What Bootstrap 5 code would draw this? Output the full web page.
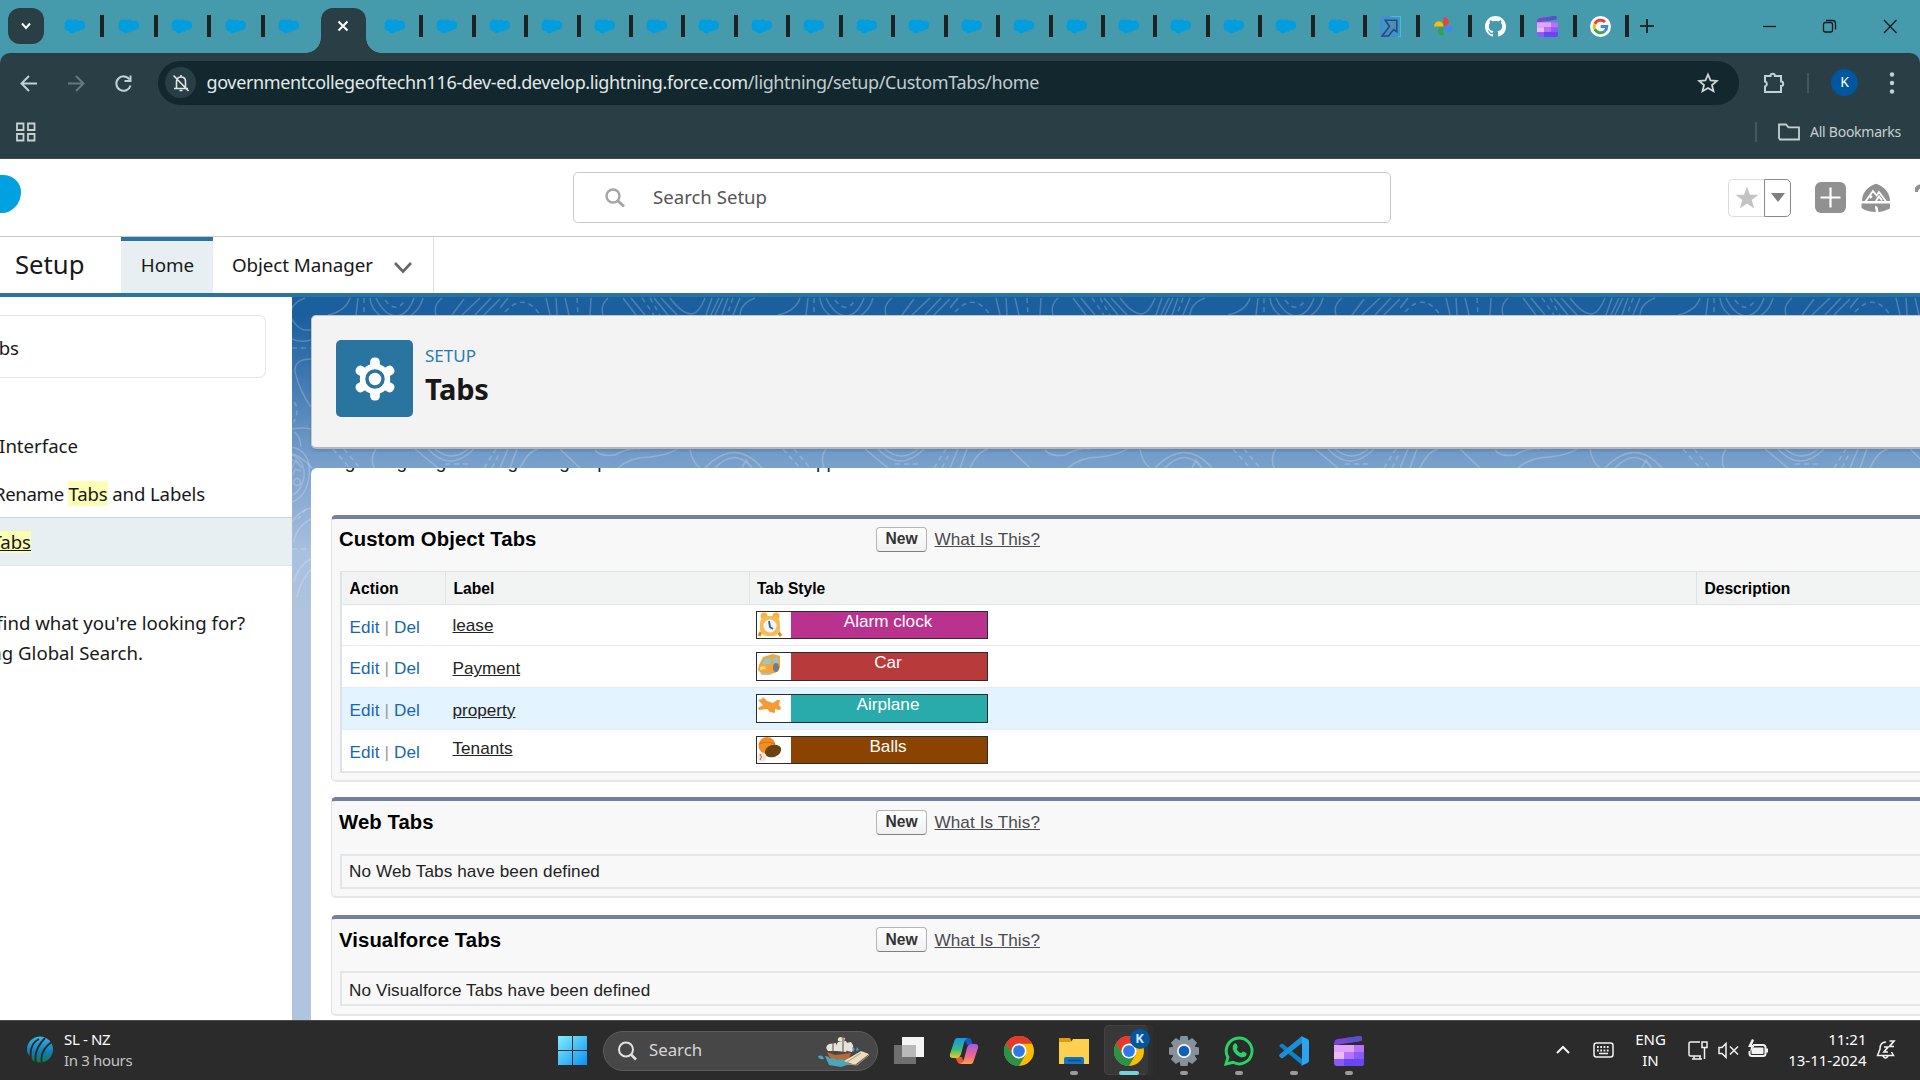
<!DOCTYPE html>
<html lang="en">
<head>
<meta charset="utf-8">
<title>Tabs | Salesforce</title>
<link href="https://cdn.jsdelivr.net/npm/bootstrap@5.3.0/dist/css/bootstrap.min.css" rel="stylesheet">
<style>
body{width:1920px;height:1080px;font-family:"Noto Sans","Open Sans",sans-serif;color:#181818;line-height:1.2}
svg{display:block;flex:none}
.tabstrip{height:53px;background:#459aac}
.tab-menu{width:36px;height:36px;margin:8px 0 0 8px;border-radius:12px;background:#293f45}
.tab-cell{width:52.45px;height:22px;padding:1px 0 0 13px;margin-top:15px;border-right:4px solid #1f2223}
.tab-cell svg{width:21px;height:21px}
.tab-first{margin-left:6.6px}
.wide-tab{width:53.6px;padding-left:13.4px}
.last-before{border-color:transparent}
.tab-active{width:45px;height:45px;margin:8px 5px 0 2.3px;border-radius:12px 12px 0 0;background:#293f45;position:relative;padding-bottom:9px}
.tab-active::before,.tab-active::after{content:"";position:absolute;bottom:0;width:15px;height:15px}
.tab-active::before{left:-15px;background:radial-gradient(circle at 0 0,transparent 14.5px,#293f45 15px)}
.tab-active::after{right:-15px;background:radial-gradient(circle at 100% 0,transparent 14.5px,#293f45 15px)}
.new-tab{width:28px;padding:19px 0 0 11px}
.chrome-top{background:#459aac}
.toolbar{height:106px;background:#293f45;border-radius:10px 10px 0 0;border-bottom:1px solid #3b4c51}
.url-row{height:52px;padding-top:7px}
.omni{width:1581px;height:44px;border-radius:22px;background:#12282e;color:#e3e9eb;font-size:18px}
.omni-site{width:31px;height:31px;border-radius:50%;background:#293f45;margin-left:7px}
.url-tx{margin-left:10.5px;letter-spacing:-.365px}
.url-path{color:#c2cdd0}
.v-rule{width:2px;height:20px;background:#42585e}
.k-avatar{width:27px;height:27px;border-radius:50%;background:#00579f;color:#fff;font-size:14px}
.bm-row{height:53px;padding-top:1px;color:#c8cfd1;font-size:14px}
.bm-tx{margin:0 19px 0 10px;letter-spacing:-.25px}
.sf-head{height:78px;border-bottom:1px solid #c9c9c9}
.sf-cloud{width:21px;height:38px;background:#00a1e0;border-radius:0 18px 19px 0/0 17px 21px 0;margin-bottom:7px}
.sf-search{width:818px;height:51px;border:1px solid #c9c9c9;border-radius:5px;font-size:18.6px;color:#555;margin-left:552px}
.fav-l{width:36px;height:38px;border:1px solid #dcdcdc;border-right:0;border-radius:5px 0 0 5px}
.fav-r{width:27px;height:38px;border:1px solid #8b8b8b;border-radius:0 5px 5px 0}
.sf-nav{height:60px;border-bottom:4px solid #2a74a0;font-size:18.8px}
.app-name{width:121px;padding-left:15px;font-size:25.7px}
.nav-home{width:92px;background:#e8eff2;border-top:4px solid #2a74a0}
.nav-home span{margin:-4px 0 0 1px}
.nav-om{width:221px;padding-left:19px;border-right:1px solid #e2e2e2}
.om-tx{letter-spacing:-.08px}
.side{width:292px;font-size:18.6px}
.side-box{width:266px;height:63px;margin-top:18px;border:1px solid #e5e5e5;border-left:0;border-radius:0 7px 7px 0}
.clip-r{display:flex;justify-content:flex-end;align-items:center;overflow:hidden;white-space:nowrap}
.ren{letter-spacing:-.13px}
.ren1{letter-spacing:-.35px}
.hl{background:#fbffb5}
.side-sel{height:49px;background:#e8eff2;border-top:1px solid #c5dae5;border-bottom:1px solid #dce8ee;padding-top:1px}
.main-area{background:#b0c4df;position:relative;overflow:hidden}
.topo{position:absolute;left:0;top:0}
.page-head{position:relative;margin:18px 0 0 19px;height:134px;width:1640px;background:#f3f3f3;border:1px solid #c4c6c9;border-bottom:2px solid #b5b9bf;border-radius:5px;box-shadow:0 2px 3px rgba(0,0,0,.12);padding:24px 0 0 24px}
.gear-tile{width:77px;height:77px;border-radius:5px;background:#2a74a0}
.eyebrow{color:#2a7ab0;font-size:17px;line-height:20px}
.page-title{font-size:29px;line-height:34px;letter-spacing:-.3px;margin-top:6px}
.frame-body{position:relative;margin:19px 0 0 19px;width:1640px;height:560px;background:#fff;border-radius:6px 0 0 0;overflow:hidden;font-family:"Liberation Sans",Arial,sans-serif;font-size:17.15px;color:#222}
.intro{font-size:19px;line-height:20px;margin-top:-16px;height:63px;padding-left:19px;white-space:nowrap}
.sect{margin-left:20px;width:1640px;background:#f8f8f8;border-left:1px solid #e2e2e2;border-bottom:2px solid #e6e6e6;border-top:4px solid #757f9c;border-radius:5px;padding-left:8px}
.sect-title{width:537px;margin-left:-1px;font-size:20.3px;letter-spacing:.1px;color:#000}
.sect-bar{height:38px;line-height:20px}
.sect-first{padding-top:2px}
.btn-new{width:51px;height:25px;padding:0;border:1px solid #b5b5b5;border-bottom-color:#7f7f7f;border-radius:4px;background:linear-gradient(#fff,#f0f0f0);font-size:15.6px;font-weight:700;line-height:22px;color:#333}
.what{color:#4a4a4f;margin-left:7.5px;text-decoration:underline;letter-spacing:.08px}
.grid-tbl{border:1px solid #e0e3e5;border-width:1px 0 1px 2px;margin-top:14px}
.g-row{height:41.75px;border-bottom:1px solid #e8eaec;background:#fff;display:flex}
.g-head{height:32.5px;background:#f2f3f3;font-size:15.6px;color:#000;font-weight:700;border-bottom:1px solid #e0e3e5}
.g-head>div{padding-top:3px}
.g-hov{background:#e3f3ff}
.c-act{width:103px;padding-left:7.5px}
.g-row .c-act{letter-spacing:.12px}
.c-lab{width:303.5px;padding-left:7.5px}
.c-sty{width:947.5px;padding-left:7.5px}
.c-des{padding-left:7.5px}
.g-head>.c-lab,.g-head>.c-sty,.g-head>.c-des{border-left:1px solid #e0e3e5}
.g-row a{color:#1766b0}
.g-row .c-lab a{color:#222;text-decoration:underline}
.g-bar{color:#999}
.swatch{width:232px;height:28.5px;border:1.5px solid #2c2c2c;color:#fff}
.swatch-ic{width:34px;background:#fff}
.swatch-tx{padding:0 2px 8px 0}
.empty{border:1px solid #e3e6e8;border-width:2px 0 2px 2px;height:35px;padding-left:7px;letter-spacing:.1px}
.taskbar{height:60px;background:#2b2b2b;border-top:1px solid #4a4c4c;color:#fff;font-size:15px;line-height:20.5px}
.tb-wx{width:494px;margin-left:11px;padding-bottom:2px;letter-spacing:-.35px}
.wx2{color:#c4c4c4}
.tray-up{margin-bottom:2px}
.tb-search{width:275px;height:40px;border-radius:20px;background:#474747;border:1px solid #5c5c5c;color:#d6d6d6;font-size:16.8px}
.tb-item{width:55px;height:60px;position:relative}
.tb-item::after{content:"";position:absolute;bottom:6px;left:23.5px;width:8px;height:4px;border-radius:2px;background:#9b9b9b}
.tb-none::after{display:none}
.tb-on::before{content:"";position:absolute;left:2px;top:4px;width:49px;height:50px;border-radius:5px;background:#383838;box-shadow:inset -6px 0 0 -1px #2f2f2f,inset 0 0 0 1px #434343}
.tb-on::after{left:17.5px;width:20px;background:#76d3dc}
.tb-on svg{position:relative}
.tb-badge{position:absolute;left:28px;top:8px;width:20px;height:20px;border-radius:50%;background:#00579f;font-size:13px;color:#cfe4f5}
</style>
<script src="https://cdn.jsdelivr.net/npm/bootstrap@5.3.0/dist/js/bootstrap.bundle.min.js"></script>
</head>
<body class="d-flex flex-column overflow-hidden m-0">
<svg width="0" height="0" class="position-absolute">
<defs>
<symbol id="sf" viewBox="0 0 20 20"><path fill="#009ddf" d="M8.300 4.200A4 4 0 0 1 14 5a4 4 0 0 1 6 4.200c0 3-2.600 4.400-4.800 4-1 1.600-2.800 1.700-4 1.200-1.200 2.800-5.400 3-6.700-.2C1.800 14.600-.2 12 .8 9.600 0 6 2.200 3.300 5 3.300c1.400 0 2.600.2 3.300.9z"/></symbol>
<symbol id="chrome" viewBox="0 0 48 48"><circle cx="24" cy="24" r="24" fill="#fbbc04"/><path fill="#e23b2e" d="M3.200 12A24 24 0 0 1 44.800 12H24L13.600 30z"/><path fill="#2d9246" d="M3.200 12A24 24 0 0 0 24 48l10.400-18L24 34H16z"/><path fill="#e23b2e" d="M44.800 12A24 24 0 0 0 3.200 12L8 17l8 1 8-6z"/><path fill="#2d9246" d="M3.200 12L13.600 30l8 6L24 48A24 24 0 0 1 3.200 12z"/><circle cx="24" cy="24" r="12" fill="#fff"/><circle cx="24" cy="24" r="9.400" fill="#2f79e8"/></symbol>
<symbol id="clip" viewBox="0 0 30 30"><path fill="#7a45d6" d="M0 8.500C0 5 1 3.500 4 3L26 0c2-.2 3 4 1 5L2 9z"/><path fill="#5b4fd0" d="M13 1.800L26 0c2-.2 3 4 1 5l-14 2z"/><path fill="#8a5cf5" d="M0 9h30v18a3 3 0 0 1-3 3H3a3 3 0 0 1-3-3z"/><path fill="#e2a3fb" d="M0 9h20v7H0z"/><path fill="#b673f7" d="M20 9h10v7H20zM10 16h10v7H10z"/><path fill="#ecb9fd" d="M0 16h10v7H0z"/><path fill="#6a45f4" d="M10 23h20v4a3 3 0 0 1-3 3H10z"/></symbol>
<symbol id="gear" viewBox="-20 -21 40 42"><g fill="currentColor"><circle r="14.500"/><g id="t"><rect x="-4.600" y="-20.500" width="9.200" height="41" rx="4"/></g><use href="#t" transform="rotate(60)"/><use href="#t" transform="rotate(120)"/></g></symbol>
</defs>
</svg>

<div class="tabstrip d-flex" id="strip">
  <div class="tab-menu d-flex align-items-center justify-content-center"><svg width="12" height="12" fill="none" stroke="#fff" stroke-width="2"><path d="M2 3.500l4 4.500 4-4.500"/></svg></div>
  <div class="tab-active d-flex align-items-center justify-content-center" id="active"><svg width="12" height="12" stroke="#fff" stroke-width="2"><path d="M1.500 1.500l9 9m0-9l-9 9"/></svg></div>
  <div class="tab-cell"><svg viewBox="0 0 20 20"><path fill="#3f96c4" stroke="#4787da" stroke-width="1.500" d="M3 1h16v18H1V4z"/><path fill="#4a8fb8" stroke="#25497a" stroke-width="1.500" d="M5 4h11v11l-3-2-5 6H2l7-9z"/><path stroke="#39c6cf" fill="none" d="M10 .5h9.500v19H17"/></svg></div>
  <div class="tab-cell"><svg viewBox="0 0 20 20"><path fill="#ea4335" d="M10 1a5 4.500 0 0 1 0 9z"/><path fill="#4285f4" d="M19 10a4.500 5 0 0 1-9 0z"/><path fill="#2fa34f" d="M10 19a5 4.500 0 0 1 0-9z"/><path fill="#fbbc04" d="M1 10a4.500 5 0 0 1 9 0z"/></svg></div>
  <div class="tab-cell"><svg viewBox="0 0 16 16" fill="#fff"><path d="M8 0C3.580 0 0 3.580 0 8c0 3.540 2.290 6.530 5.470 7.590.4.070.55-.17.55-.38 0-.19-.01-.82-.01-1.490-2.010.37-2.530-.49-2.690-.94-.09-.23-.48-.94-.82-1.130-.28-.15-.68-.52-.01-.53.63-.01 1.080.58 1.230.82.720 1.210 1.870.87 2.330.66.070-.52.280-.87.510-1.070-1.780-.2-3.640-.89-3.640-3.950 0-.87.310-1.590.82-2.150-.08-.2-.36-1.020.08-2.120 0 0 .67-.21 2.200.82.640-.18 1.320-.27 2-.27s1.360.09 2 .27c1.530-1.040 2.200-.82 2.200-.82.440 1.100.160 1.920.080 2.120.510.560.820 1.270.820 2.150 0 3.070-1.870 3.750-3.650 3.950.290.250.540.730.540 1.480 0 1.070-.01 1.930-.01 2.200 0 .21.150.46.550.38A8.010 8.010 0 0 0 16 8c0-4.420-3.580-8-8-8z"/></svg></div>
  <div class="tab-cell"><svg><use href="#clip"/></svg></div>
  <div class="tab-cell"><svg viewBox="0 0 20 20"><circle cx="10" cy="10" r="10" fill="#fff"/><g fill="none" stroke-width="2.800"><path stroke="#ea4335" d="M4.600 7.400A6 6 0 0 1 14.300 5.800"/><path stroke="#fbbc04" d="M4.600 12.600a6 6 0 0 1 0-5.200"/><path stroke="#34a853" d="M14 14.500a6 6 0 0 1-9.400-1.900"/><path stroke="#4285f4" d="M10.200 10H16a6 6 0 0 1-2 4.500"/></g></svg></div>
  <div class="new-tab"><svg width="14" height="14" stroke="#1d2b2e" stroke-width="2"><path d="M7 0v14M0 7h14"/></svg></div>
  <svg width="170" height="53" class="ms-auto" fill="none" stroke="#101a1c" stroke-width="1.300"><path d="M13 26.500h13"/><rect x="73.500" y="22.500" width="9" height="9.500" rx="2"/><path d="M76 20.500h6.500a3 3 0 0 1 3 3v6"/><path d="M134 20l12.500 13M146.500 20L134 33"/></svg>
</div>

<div class="chrome-top">
<div class="toolbar">
  <div class="url-row d-flex align-items-center">
    <svg width="158" height="44" fill="none" stroke="#c0d2d7" stroke-width="2"><path d="M37 22.500H22M29 15l-7.500 7.500L29 30"/><path stroke="#66797e" d="M68 22.500h15M76 15l7.500 7.500L76 30"/><path d="M129.500 18.500a7.200 7.200 0 1 0 1 6"/><path d="M130.500 14.500v5.500h-6" /></svg>
    <div class="omni d-flex align-items-center">
      <div class="omni-site d-flex align-items-center justify-content-center"><svg width="20" height="20" fill="none" stroke="#e0e6e8" stroke-width="1.600"><path d="M3 15.500h14M5.500 15V8.500C5.500 5.500 7.500 4 10 4s4.500 1.500 4.500 4.500V15M10 2v2M8.500 17.500h3M2.500 2.500l15 15.500"/></svg></div>
      <span class="url-tx">governmentcollegeoftechn116-dev-ed.develop.lightning.force.com<span class="url-path">/lightning/setup/CustomTabs/home</span></span>
      <svg width="42" height="22" class="ms-auto" fill="none" stroke="#cfd6d8" stroke-width="1.800"><path d="M11 2.500l2.500 5.800 6.300.6-4.800 4.100 1.500 6.200L11 16l-5.500 3.200L7 13 2.200 8.900l6.300-.6z"/></svg>
    </div>
    <svg width="24" height="24" style="margin-left:23px" fill="none" stroke="#c0d2d7" stroke-width="2"><path d="M3 5h5.500a2.200 2.200 0 0 1 4.400 0H19v5.500a2.200 2.200 0 0 1 0 4.400V21H3v-5.500a2.600 2.600 0 0 0 0-5z"/></svg>
    <div class="v-rule" style="margin-left:21px"></div>
    <div class="k-avatar d-flex align-items-center justify-content-center" style="margin-left:22px">K</div>
    <svg width="6" height="24" style="margin-left:31px" fill="#c0d2d7"><circle cx="3" cy="3.500" r="2.200"/><circle cx="3" cy="12" r="2.200"/><circle cx="3" cy="20.500" r="2.200"/></svg>
  </div>
  <div class="bm-row d-flex align-items-center">
    <svg width="20" height="20" style="margin-left:16px" fill="none" stroke="#c8cfd1" stroke-width="1.800"><path d="M1 1.500h6.500V8H1zM12 1.500h6.500V8H12zM1 12h6.500v6.500H1zM12 12h6.500v6.500H12z"/></svg>
    <div class="v-rule ms-auto"></div>
    <svg width="22" height="18" style="margin-left:21px" fill="none" stroke="#c8cfd1" stroke-width="1.800"><path d="M1 15V1.500h7l2.500 2.800H21V16.500H2z"/></svg>
    <span class="bm-tx">All Bookmarks</span>
  </div>
</div>
</div>

<header class="sf-head d-flex align-items-center bg-white flex-shrink-0">
  <div class="sf-cloud"></div>
  <div class="sf-search d-flex align-items-center">
    <svg width="22" height="22" style="margin-left:30px" fill="none" stroke="#a5a5a5" stroke-width="2.400"><circle cx="9" cy="9" r="6.500"/><path d="M13.500 13.500l6.500 6" stroke-width="3"/></svg>
    <span style="margin-left:27px">Search Setup</span>
  </div>
  <div class="d-flex align-items-center" style="margin-left:337px">
    <div class="fav-l d-flex align-items-center justify-content-center"><svg width="24" height="24" fill="#c4c4c4"><path d="M12 .5l3 8.300h8.500l-6.800 5.200 2.500 8.500L12 17.500 4.800 22.500 7.300 14 .5 8.800H9z"/></svg></div>
    <div class="fav-r d-flex align-items-center justify-content-center"><svg width="14" height="9" fill="#7f7f7f"><path d="M0 0h14L7 9z"/></svg></div>
    <svg width="31" height="31" style="margin-left:24px"><rect width="31" height="31" rx="6" fill="#919191"/><path d="M15.500 5.500v20M5.500 15.500h20" stroke="#fff" stroke-width="2.200"/></svg>
    <svg width="30" height="30" style="margin-left:15px"><path fill="#919191" d="M1 18C1 9 8 3 15 .8 22 3 29 9 29 18zM.5 20.500h28.500v5C24 28 19 29 17.500 29l-1-5-2-1.500-.5 2 1 4.500C11 29 5 28 .5 25z"/><path d="M4.500 18.500L12 8l3.500 4.500L18 9l7 9.500M9 15l2-2M15 18l3-4.500 3 4" fill="none" stroke="#fff" stroke-width="1.900"/></svg>
    <svg width="5" height="30" style="margin-left:24px"><path d="M1 9Q1 4 6 3" fill="none" stroke="#919191" stroke-width="4"/></svg>
  </div>
</header>
<nav class="sf-nav d-flex bg-white flex-shrink-0">
  <div class="app-name d-flex align-items-center">Setup</div>
  <div class="nav-home d-flex align-items-center justify-content-center"><span>Home</span></div>
  <div class="nav-om d-flex align-items-center"><span class="om-tx">Object Manager</span><svg width="18" height="13" style="margin:4px 21px 0 auto" fill="none" stroke="#666" stroke-width="2.600"><path d="M1 2l8 8.500L17 2"/></svg></div>
</nav>

<div class="d-flex flex-grow-1 overflow-hidden">
  <aside class="side bg-white flex-shrink-0">
    <div class="side-box d-flex align-items-center pt-1"><div class="clip-r" style="width:19px">bs</div></div>
    <div class="clip-r" style="width:78px;height:30px;margin-top:53px">Interface</div>
    <div class="clip-r" style="width:205px;height:30px;margin-top:18px"><span class="ren"><span class="ren1">Rename</span> <span class="hl">Tabs</span> and Labels</span></div>
    <div class="side-sel d-flex align-items-center" style="margin-top:8px"><div class="clip-r" style="width:31px"><span class="hl text-decoration-underline">Tabs</span></div></div>
    <div class="clip-r" style="width:245px;height:30px;margin-top:42px">find what you're looking for?</div>
    <div class="clip-r" style="width:143px;height:30px">ng Global Search.</div>
  </aside>
  <main class="main-area flex-grow-1">
    <svg class="topo" width="1628" height="320" fill="none" stroke="#fff" stroke-opacity=".21" stroke-width="1.500">
      <defs>
        <linearGradient id="sky" x1="0" y1="0" x2="0" y2="1"><stop offset=".06" stop-color="#1b5f9f"/><stop offset=".25" stop-color="#3f78b0"/><stop offset=".5" stop-color="#759dca"/><stop offset=".8" stop-color="#a9c0df"/><stop offset="1" stop-color="#b0c4df"/></linearGradient>
        <pattern id="wave" x="208" y="0" width="450" height="172" patternUnits="userSpaceOnUse">
          <path d="M0 11L8 1M46 1l4 17M56 1l1 17M65 1l4 17M91 1l-1 17M108 1Q100 8 103 18M123 1l13 17M131 1l14 17M154 1l14 17M161 1l16 17M170 1Q182 17 192 17 199 16 205 1M212 1l-6 17M219 1l-8 17M223 1l-8 17M228 1l-6 17M240 1l-7 17M255 1Q241 6 240 18M300 1Q296 14 278 18M308 1l-2 17M320 1Q322 20 346 24 368 20 373 1M326 1Q334 18 346 19 358 18 364 1M392 1Q383 8 386 18M430 1l-18 17M414 2l-12 16M441 1l-16 17M450 2l-16 16"/>
          <path stroke-dasharray="5 4" d="M5 15Q24-6 40 18M77 1l1 17M142 1l12 17M150 1l10 17M233 1l-6 17M314 1v17M335 3Q346 18 356 2"/>
          <path d="M0 171l8-19M10 171l7-19M20 171Q28 154 38 152M60 152l20 19M95 153Q100 160 115 158 130 150 140 152M118 171Q130 160 150 160 170 158 180 150M190 152Q192 165 200 171M205 171Q235 140 262 171M215 171Q235 150 252 171M242 171l4-8 6 8M326 152Q320 160 324 171M365 152l23 19M378 152Q400 176 424 152M385 152Q402 166 418 152"/>
          <path stroke-dasharray="5 4" d="M283 152l17 19M294 152l16 19M395 167h26M434 171l12-19M442 171l8-16"/>
        </pattern>
      </defs>
      <rect width="1628" height="320" fill="url(#sky)" stroke="none"/>
      <rect width="1628" height="172" fill="url(#wave)" stroke="none"/>
      <path d="M0 22Q5 31 12 33h7M0 42Q8 46 19 43M19 62Q2 62 3 75 8 95 19 110M0 132q10-2 19 0M2 135q6 3 7 15M0 150Q20 155 17 180 14 200 0 205M0 158q13 5 12 22-4 16-12 18M1 178l2-6 6 2M0 225q8-12 19-14M19 222Q4 230 2 245M19 262Q6 268 2 285M19 272Q8 285 5 300"/><circle cx="5" cy="185" r="3.500"/>
      <path stroke-dasharray="5 4" d="M0 51h19M2 105q6 7 0 20M14 212l-8 10M0 252h19"/>
    </svg>
    <div class="page-head d-flex">
      <div class="gear-tile d-flex align-items-center justify-content-center text-white"><svg width="42" height="44"><use href="#gear"/><circle cx="21" cy="22" r="8" fill="#fff" stroke="#2a74a0" stroke-width="3.500"/></svg></div>
      <div style="margin:6px 0 0 12px"><div class="eyebrow">SETUP</div><div class="page-title fw-bold">Tabs</div></div>
    </div>
    <div class="frame-body">
      <div class="intro">Lightning Pages to Lightning Experience and the mobile app</div>
      <section class="sect" style="height:267px">
        <div class="sect-bar sect-first d-flex align-items-center"><div class="sect-title fw-bold">Custom Object Tabs</div><button class="btn btn-new">New</button><a class="what">What Is This?</a></div>
        <div class="grid-tbl">
          <div class="g-row g-head"><div class="c-act d-flex align-items-center">Action</div><div class="c-lab d-flex align-items-center">Label</div><div class="c-sty d-flex align-items-center">Tab Style</div><div class="c-des d-flex align-items-center flex-grow-1">Description</div></div>
          <div class="g-row align-items-center"><div class="c-act pt-1"><a class="text-decoration-none">Edit</a> <span class="g-bar">|</span> <a class="text-decoration-none">Del</a></div><div class="c-lab"><a>lease</a></div><div class="c-sty"><div class="swatch d-flex" style="background:#b8328e"><div class="swatch-ic"><svg width="30" height="25"><circle cx="7" cy="4" r="3.500" fill="#f5b53a"/><circle cx="19" cy="4" r="3.500" fill="#f5b53a"/><path d="M4 20l-2 4M21 20l3 4" stroke="#d98c1c" stroke-width="3"/><rect x="3" y="4" width="20" height="20" rx="7" fill="#f6bd55"/><circle cx="13" cy="14" r="6.500" fill="#f4f6fa"/><path d="M12 9l1 6 3 2" fill="none" stroke="#345d9c" stroke-width="1.800"/></svg></div><div class="swatch-tx flex-grow-1 d-flex align-items-center justify-content-center">Alarm clock</div></div></div></div>
          <div class="g-row align-items-center"><div class="c-act pt-1"><a class="text-decoration-none">Edit</a> <span class="g-bar">|</span> <a class="text-decoration-none">Del</a></div><div class="c-lab pt-1"><a>Payment</a></div><div class="c-sty"><div class="swatch d-flex" style="background:#b83a3a"><div class="swatch-ic"><svg width="30" height="25"><path fill="#f2a73a" d="M2 12L6 4l10-3 7 2v12l-5 5H4l-3-3z"/><path fill="#8fc7dc" d="M5 11l3-5 6-1v6zM16 5l5-1v6l-4 2z"/><path fill="#fbd98a" d="M3 14l5-1 1 3-6 1z"/><ellipse cx="19" cy="14.500" rx="3" ry="4.500" fill="#727d86"/><path fill="#bbb" d="M3 20h14l-4 2H5z"/></svg></div><div class="swatch-tx flex-grow-1 d-flex align-items-center justify-content-center">Car</div></div></div></div>
          <div class="g-row g-hov align-items-center"><div class="c-act pt-1"><a class="text-decoration-none">Edit</a> <span class="g-bar">|</span> <a class="text-decoration-none">Del</a></div><div class="c-lab pt-1"><a>property</a></div><div class="c-sty"><div class="swatch d-flex" style="background:#2aabab"><div class="swatch-ic"><svg width="30" height="25"><path fill="#f39b35" d="M1 5l4-1 1-2 4 4 6 2 4-3 3 0-1 5c3 3 2 5 0 5l-4-1 0 4-5-1-3-3-8 1-1-2 5-3z"/></svg></div><div class="swatch-tx flex-grow-1 d-flex align-items-center justify-content-center">Airplane</div></div></div></div>
          <div class="g-row align-items-center"><div class="c-act pt-1"><a class="text-decoration-none">Edit</a> <span class="g-bar">|</span> <a class="text-decoration-none">Del</a></div><div class="c-lab pb-1"><a>Tenants</a></div><div class="c-sty"><div class="swatch d-flex" style="background:#8b4300"><div class="swatch-ic"><svg width="30" height="25"><circle cx="10" cy="8.500" r="8.500" fill="#ef8f22"/><path d="M2 7q8-4 16 0" fill="none" stroke="#d8720e"/><ellipse cx="16" cy="14" rx="8.500" ry="6" fill="#6b4313" transform="rotate(-20 16 14)"/><circle cx="5" cy="20" r="4.500" fill="#eee4e0"/><path d="M3 17q3 3 0 6" fill="none" stroke="#d9534f"/></svg></div><div class="swatch-tx flex-grow-1 d-flex align-items-center justify-content-center">Balls</div></div></div></div>
        </div>
      </section>
      <section class="sect" style="height:101px;margin-top:15px">
        <div class="sect-bar d-flex align-items-center pt-1"><div class="sect-title fw-bold">Web Tabs</div><button class="btn btn-new">New</button><a class="what">What Is This?</a></div>
        <div class="empty d-flex align-items-center" style="margin-top:15px">No Web Tabs have been defined</div>
      </section>
      <section class="sect" style="height:101px;margin-top:16.5px">
        <div class="sect-bar d-flex align-items-center pt-1"><div class="sect-title fw-bold">Visualforce Tabs</div><button class="btn btn-new">New</button><a class="what">What Is This?</a></div>
        <div class="empty d-flex align-items-center pt-1" style="margin-top:14px">No Visualforce Tabs have been defined</div>
      </section>
    </div>
  </main>
</div>

<footer class="taskbar d-flex align-items-center flex-shrink-0">
  <svg width="26" height="28" style="margin-left:27px" class="tray-up" viewBox="0 0 26 28"><defs><linearGradient id="ic" x1="0" y1="0" x2="0" y2="1"><stop offset="0" stop-color="#3ab4e6"/><stop offset=".6" stop-color="#0f7db8"/><stop offset="1" stop-color="#0c7a45"/></linearGradient></defs><circle cx="13" cy="13.500" r="13" fill="url(#ic)"/><path d="M-1 17L5 24M4 22Q2 8 12 3M9 27Q6 14 18 2M15 28Q12 14 26 5" fill="none" stroke="#2b2b2b" stroke-width="1.900"/></svg>
  <div class="tb-wx"><div>SL - NZ</div><div class="wx2">In 3 hours</div></div>
  <svg width="29" height="29"><defs><linearGradient id="win" x1="0" y1="0" x2="1" y2="1"><stop offset="0" stop-color="#7ef0fc"/><stop offset="1" stop-color="#0c90f4"/></linearGradient></defs><path fill="url(#win)" d="M0 0h14v14H0zM15 0h14v14H15zM0 15h14v14H0zM15 15h14v14H15z"/></svg>
  <div class="tb-search d-flex align-items-center" style="margin-left:16px">
    <svg width="20" height="20" style="margin-left:13px" fill="none" stroke="#e2e2e2" stroke-width="2"><circle cx="9" cy="8.500" r="7"/><path d="M14 13.500l5 5" stroke-width="2.500"/></svg>
    <span style="margin-left:12px">Search</span>
    <svg width="52" height="34" class="ms-auto" style="margin-right:8px"><path fill="#b56a38" d="M10 18l8 3 16-2-3 9H15z"/><path fill="#e6e2dc" d="M11 17q-4-4 1-7l7-1 1 8zM20 17q-2-5 1-9l8-1q4 6 0 11zM30 17q2-6-1-8l5-1q4 5 1 10zM21 7q-1-3 2-4l5 1-1 4z"/><path d="M26 0v18M16 7v12" stroke="#6b4a33"/><path fill="#4ba6bb" d="M8 22q4 0 5 3 4-2 7 1 5-2 9 1l4 3-9 3-12-2z"/><path fill="#4ba6bb" d="M1 22q5-2 6 3-5 1-6-3zM35 13l3 2-2 3zM40 13l2 3-3 1z"/><path fill="#e9dcc0" d="M27 27L44 17l8 3-14 11z"/><path d="M30 30l10 1 12-10M30 28l14-9" stroke="#b09b78" fill="none"/></svg>
  </div>
  <div class="d-flex" style="margin-left:3.500px">
    <div class="tb-item tb-none d-flex align-items-center justify-content-center"><svg width="30" height="28"><path fill="#f4f4f4" d="M8 0h22v20H8z"/><path fill="#6f6f6f" d="M0 8h22v19H0z"/><path fill="#b9b9b9" d="M8 8h14v12H8z"/></svg></div>
    <div class="tb-item tb-none d-flex align-items-center justify-content-center"><svg width="30" height="30" viewBox="0 0 30 30"><defs><linearGradient id="cp1" x1="0" y1="0" x2="0" y2="1"><stop offset="0" stop-color="#1696e8"/><stop offset=".55" stop-color="#35b889"/><stop offset="1" stop-color="#e8cd25"/></linearGradient><linearGradient id="cp2" x1="0" y1="0" x2="0" y2="1"><stop offset="0" stop-color="#a05be8"/><stop offset=".6" stop-color="#f0668c"/><stop offset="1" stop-color="#fba04e"/></linearGradient></defs><path fill="#1558c0" d="M15 2h5q2 0 3 4l1 3h-6z"/><path fill="#f0562b" d="M6 21h7l2 7h-4q-2 0-3-3z"/><path fill="url(#cp1)" d="M8 2h11q-3 1-4 5l-3 11q-1 4-5 4H4q-4 0-3-4L5 6q1-4 3-4z"/><path fill="url(#cp2)" d="M22 28H11q3-1 4-5l3-11q1-4 5-4h3q4 0 3 4l-4 12q-1 4-3 4z"/></svg></div>
    <div class="tb-item tb-none d-flex align-items-center justify-content-center"><svg width="30" height="30"><use href="#chrome"/></svg></div>
    <div class="tb-item d-flex align-items-center justify-content-center"><svg width="30" height="28"><path fill="#dd9e0b" d="M0 1h11l2 4v5H0z"/><path fill="#fdd04f" d="M0 5h12l2-3h16v25H0z"/><path fill="#1273c4" d="M5 27v-5q0-2 2-2h16q2 0 2 2v5z"/><path d="M9 23.500h13" stroke="#0a4a86" stroke-width="1.500"/></svg></div>
    <div class="tb-item tb-on d-flex align-items-center justify-content-center"><svg width="30" height="30"><use href="#chrome"/></svg><div class="tb-badge d-flex align-items-center justify-content-center fw-bold">K</div></div>
    <div class="tb-item d-flex align-items-center justify-content-center"><svg width="30" height="30" viewBox="-15 -15 30 30"><g fill="#86919b"><circle r="11.500"/><g id="g4"><path d="M-3.500-15h7l1 5h-9zM-3.500 15h7l1-5h-9z"/></g><use href="#g4" transform="rotate(45)"/><use href="#g4" transform="rotate(90)"/><use href="#g4" transform="rotate(135)"/></g><circle r="7" fill="#f0f2f4"/><circle r="5.300" fill="#0f62b0"/></svg></div>
    <div class="tb-item d-flex align-items-center justify-content-center"><svg width="30" height="30" viewBox="0 0 30 30"><path d="M2 28l1.900-6.700A12.900 12.900 0 1 1 9 26.300z" fill="none" stroke="#27d366" stroke-width="2.900"/><path fill="#27d366" d="M10.500 7.500c1-.5 1.700 0 2 .6l1.200 2.800c.2.900-1.200 1.900-1 2.300 1 1.900 2.300 3 4.300 3.900.7 0 1.500-1.900 2.300-1.600l3 1.500c.7.500.2 2.700-1 3.600-2.500 1.700-6 .3-8.800-1.900C9 15.600 7 11 10.500 7.500z"/></svg></div>
    <div class="tb-item d-flex align-items-center justify-content-center"><svg width="30" height="30" viewBox="0 0 30 30"><path fill="#0f7fc9" d="M0 10l2-2q1-.6 2 0l19 15v6z"/><path fill="#1b8fd8" d="M0 20l2 2q1 .6 2 0L23 7V0L1 18q-1 1-1 2z"/><path fill="#2ba5f0" d="M22 0l6.500 3Q30 4 30 5v20q0 1-1.500 2L22 30q1-1 1-3V3q0-2-1-3z"/></svg></div>
    <div class="tb-item d-flex align-items-center justify-content-center"><svg width="30" height="30"><use href="#clip"/></svg></div>
  </div>
  <div class="d-flex align-items-center tray-up">
  <svg width="62" height="24" style="margin-left:179px" fill="none" stroke="#f2f2f2"><path d="M1 15l6-6 6 6" stroke-width="2"/><rect x="38" y="5" width="19" height="14" rx="2.500" stroke-width="1.500"/><path d="M41 9h13M41 12.500h13" stroke-width="2" stroke-dasharray="1.700 1.600"/><path d="M43 15.500h9" stroke-width="1.500"/></svg>
  <div class="text-center" style="width:40px;margin-left:13px"><div>ENG</div><div>IN</div></div>
  <svg width="84" height="24" style="margin-left:16px" fill="none" stroke="#f2f2f2" stroke-width="1.500"><path d="M13 4H3.500q-1.500 0-1.500 1.500v11q0 1.500 1.500 1.500H14M5 21h10M7 18v3M13 18v3M15 4h5v5.500h-5zM17.500 10v11"/><path d="M32 9.500h3l4-4v14l-4-4h-3zM43 8.500l8 8M51 8.500l-8 8"/><path d="M66 7h10q2.500 0 2.500 2.500v6q0 2.500-2.500 2.500H65q-2.500 0-2.500-2.500V13M80 10.500v4" stroke-width="2"/><path fill="#f2f2f2" stroke="none" d="M66 9.500h9.500q1 0 1 1V15q0 1-1 1h-10q-1 0-1-1v-3zM65 1l-4 8h3l-1 5 5-7h-3l2-5z"/></svg>
  <div class="text-end" style="width:96px"><div>11:21</div><div>13-11-2024</div></div>
  <svg width="20" height="22" style="margin-left:9px" fill="none" stroke="#f2f2f2" stroke-width="1.500"><path d="M10 3Q4 3 4 10l-2.500 6.500h16L15.500 13M7 17q2.500 4 5 0"/><path d="M8 8h4l-4 5h4M13.500 2H18l-4.500 5.500H18" stroke-width="1.700"/></svg>
  </div>
</footer>
<script>
/* Salesforce tabs on both sides of the active one */
const active = document.getElementById('active');
const cell = cls => `<div class="tab-cell flex-shrink-0 ${cls}"><svg><use href="#sf"/></svg></div>`;
active.insertAdjacentHTML('beforebegin', [0,1,2,3,4].map(i => cell('wide-tab' + (i ? '' : ' tab-first') + (i == 4 ? ' last-before' : ''))).join(''));
active.insertAdjacentHTML('afterend', Array(19).fill(cell('')).join(''));
</script>
</body>
</html>
